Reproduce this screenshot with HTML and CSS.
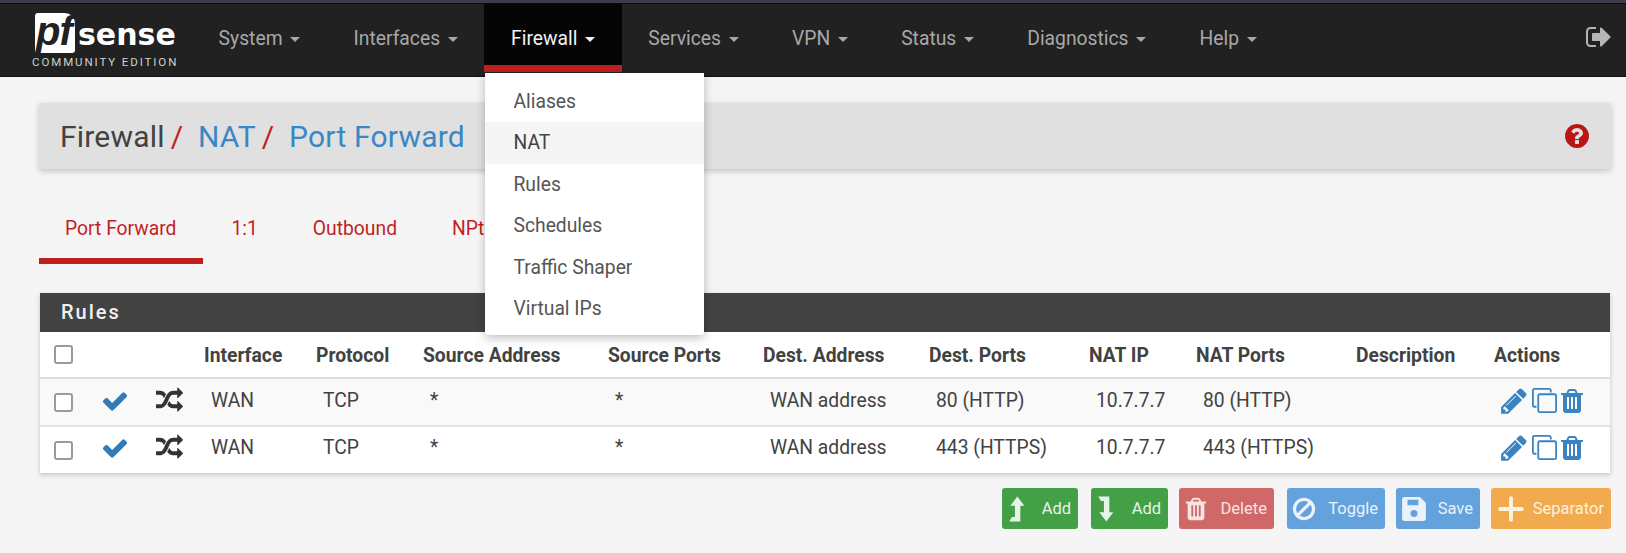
FILE: index.html
```html
<!DOCTYPE html>
<html lang="en">
<head>
    <meta charset="UTF-8">
    <meta name="viewport" content="width=device-width, initial-scale=1.0">
    <title>Firewall: NAT: Port Forward</title>
    <link rel="stylesheet" href="styles.css">
</head>
<body>
    <svg class="icon-defs" width="0" height="0">
        <defs>
            <symbol id="i-check" viewBox="0 0 1792 1792"><path d="M1671 566q0 40-28 68l-724 724-136 136q-28 28-68 28t-68-28l-136-136-362-362q-28-28-28-68t28-68l136-136q28-28 68-28t68 28l294 295 656-657q28-28 68-28t68 28l136 136q28 28 28 68z"/></symbol>
            <symbol id="i-random" viewBox="0 0 1792 1792"><path d="M666 481q-60 92-137 273-22-45-37-72.5t-40.5-63.5-51-56.5-63-35-81.5-14.5h-224q-14 0-23-9t-9-23v-192q0-14 9-23t23-9h224q250 0 410 225zm1126 799q0 14-9 23l-320 320q-9 9-23 9-13 0-22.5-9.5t-9.5-22.5v-192q-32 0-85 .5t-81 1-73-1-71-5-64-10.5-63-18.5-58-28.5-59-40-55-53.5-56-69.5q59-93 136-273 22 45 37 72.5t40.5 63.5 51 56.5 63 35 81.5 14.5h256v-192q0-14 9-23t23-9q12 0 24 10l319 319q9 9 9 23zm0-896q0 14-9 23l-320 320q-9 9-23 9-13 0-22.5-9.5t-9.5-22.5v-192h-256q-48 0-87 15t-69 45-51 61.5-45 77.5q-32 62-78 171-29 66-49.5 111t-54 105-64 100-74 83-90 68.5-106.5 42-128 16.5h-224q-14 0-23-9t-9-23v-192q0-14 9-23t23-9h224q48 0 87-15t69-45 51-61.5 45-77.5q32-62 78-171 29-66 49.5-111t54-105 64-100 74-83 90-68.5 106.5-42 128-16.5h256v-192q0-14 9-23t23-9q12 0 24 10l319 319q9 9 9 23z"/></symbol>
            <symbol id="i-pencil" viewBox="0 0 1792 1792"><path d="M491 1536l91-91-235-235-91 91v107h128v128h107zm523-928q0-22-22-22-10 0-17 7l-542 542q-7 7-7 17 0 22 22 22 10 0 17-7l542-542q7-7 7-17zm-54-192l416 416-832 832h-416v-416zm683 96q0 53-37 90l-166 166-416-416 166-165q36-38 90-38 53 0 91 38l235 234q37 39 37 91z"/></symbol>
            <symbol id="i-clone" viewBox="0 0 1792 1792"><path d="M1664 1632v-1088q0-13-9.5-22.5t-22.5-9.5h-1088q-13 0-22.5 9.5t-9.5 22.5v1088q0 13 9.5 22.5t22.5 9.5h1088q13 0 22.5-9.5t9.5-22.5zm128-1088v1088q0 66-47 113t-113 47h-1088q-66 0-113-47t-47-113v-1088q0-66 47-113t113-47h1088q66 0 113 47t47 113zm-384-384v160h-128v-160q0-13-9.5-22.5t-22.5-9.5h-1088q-13 0-22.5 9.5t-9.5 22.5v1088q0 13 9.5 22.5t22.5 9.5h160v128h-160q-66 0-113-47t-47-113v-1088q0-66 47-113t113-47h1088q66 0 113 47t47 113z"/></symbol>
            <symbol id="i-trash" viewBox="0 0 1792 1792"><path d="M704 1376v-704q0-14-9-23t-23-9h-64q-14 0-23 9t-9 23v704q0 14 9 23t23 9h64q14 0 23-9t9-23zm256 0v-704q0-14-9-23t-23-9h-64q-14 0-23 9t-9 23v704q0 14 9 23t23 9h64q14 0 23-9t9-23zm256 0v-704q0-14-9-23t-23-9h-64q-14 0-23 9t-9 23v704q0 14 9 23t23 9h64q14 0 23-9t9-23zm-544-992h448l-48-117q-7-9-17-11h-317q-10 2-17 11zm928 32v64q0 14-9 23t-23 9h-96v948q0 83-47 143.5t-113 60.5h-832q-66 0-113-58.5t-47-141.5v-952h-96q-14 0-23-9t-9-23v-64q0-14 9-23t23-9h309l70-167q15-37 54-63t79-26h320q40 0 79 26t54 63l70 167h309q14 0 23 9t9 23z"/></symbol>
            <symbol id="i-ban" viewBox="0 0 1792 1792"><path d="M1440 893q0-161-87-295l-754 753q137 89 297 89 111 0 211.5-43.5t173.5-116.5 116-174.5 43-212.5zm-999 299l755-754q-135-91-300-91-148 0-273 73t-198 199-73 274q0 162 89 299zm1223-299q0 157-61 300t-163.5 246-245 164-298.5 61-298.5-61-245-164-163.5-246-61-300 61-299.5 163.5-245.5 245-164 298.5-61 298.5 61 245 164 163.5 245.5 61 299.5z"/></symbol>
            <symbol id="i-level" viewBox="0 0 24 26"><path d="M9.5 1.5 L16 10 H12.3 V24.5 H2 L4.5 20.5 H7.3 V10 H3 Z"/></symbol>
        </defs>
    </svg>

    <div class="top-strip"></div>
    <nav class="navbar">
        <a class="brand">
            <span class="brand-logo"><span class="brand-pf">pf</span><span class="brand-sense">sense</span></span>
            <span class="brand-sub">COMMUNITY EDITION</span>
        </a>
        <ul class="nav-list">
            <li class="nav-item">System <span class="caret"></span></li>
            <li class="nav-item">Interfaces <span class="caret"></span></li>
            <li class="nav-item active">Firewall <span class="caret"></span>
                <ul class="dropdown">
                    <li>Aliases</li>
                    <li class="hover">NAT</li>
                    <li>Rules</li>
                    <li>Schedules</li>
                    <li>Traffic Shaper</li>
                    <li>Virtual IPs</li>
                </ul>
            </li>
            <li class="nav-item">Services <span class="caret"></span></li>
            <li class="nav-item">VPN <span class="caret"></span></li>
            <li class="nav-item">Status <span class="caret"></span></li>
            <li class="nav-item">Diagnostics <span class="caret"></span></li>
            <li class="nav-item">Help <span class="caret"></span></li>
        </ul>
        <svg class="logout" viewBox="0 0 1792 1792"><path d="M704 1440q0 4 1 20t.5 26.5-3 23.5-10 19.5-20.5 6.5h-320q-119 0-203.5-84.5t-84.5-203.5v-704q0-119 84.5-203.5t203.5-84.5h320q13 0 22.5 9.5t9.5 22.5q0 4 1 20t.5 26.5-3 23.5-10 19.5-20.5 6.5h-320q-66 0-113 47t-47 113v704q0 66 47 113t113 47h312l11.5 1 11.5 3 8 5.5 7 9 2 13.5zm928-544q0 26-19 45l-544 544q-19 19-45 19t-45-19-19-45v-288h-448q-26 0-45-19t-19-45v-384q0-26 19-45t45-19h448v-288q0-26 19-45t45-19 45 19l544 544q19 19 19 45z"/></svg>
    </nav>

    <main class="content">
        <header class="page-header">
            <h1 class="crumbs">
                <span>Firewall</span><span class="sep">/</span>
                <a>NAT</a><span class="sep">/</span>
                <a>Port Forward</a>
            </h1>
            <svg class="help" viewBox="0 0 1792 1792"><path d="M1024 1376v-192q0-14-9-23t-23-9h-192q-14 0-23 9t-9 23v192q0 14 9 23t23 9h192q14 0 23-9t9-23zm256-672q0-88-55.5-163t-138.5-116-170-41q-243 0-371 213-15 24 8 42l132 100q7 6 19 6 16 0 25-12 53-68 86-92 34-24 86-24 48 0 85.5 26t37.5 59q0 38-20 61t-68 45q-63 28-115.5 86.5t-52.5 125.5v36q0 14 9 23t23 9h192q14 0 23-9t9-23q0-19 21.5-49.5t54.5-49.5q32-18 49-28.5t46-35 44.5-48 28-60.5 12.5-81zm384 192q0 209-103 385.5t-279.5 279.5-385.5 103-385.5-103-279.5-279.5-103-385.5 103-385.5 279.5-279.5 385.5-103 385.5 103 279.5 279.5 103 385.5z"/></svg>
        </header>

        <ul class="tabs">
            <li class="tab active">Port Forward</li>
            <li class="tab">1:1</li>
            <li class="tab">Outbound</li>
            <li class="tab">NPt</li>
        </ul>

        <section class="panel">
            <h2 class="panel-title">Rules</h2>
            <table class="rules">
                <colgroup>
                    <col class="c-check"><col class="c-state"><col class="c-type">
                    <col class="c-if"><col class="c-proto"><col class="c-src"><col class="c-sport">
                    <col class="c-dst"><col class="c-dport"><col class="c-ip"><col class="c-nport">
                    <col class="c-desc"><col class="c-act">
                </colgroup>
                <thead>
                    <tr>
                        <th><span class="checkbox"></span></th>
                        <th></th>
                        <th></th>
                        <th>Interface</th>
                        <th>Protocol</th>
                        <th>Source Address</th>
                        <th>Source Ports</th>
                        <th>Dest. Address</th>
                        <th>Dest. Ports</th>
                        <th>NAT IP</th>
                        <th>NAT Ports</th>
                        <th>Description</th>
                        <th>Actions</th>
                    </tr>
                </thead>
                <tbody>
                    <tr class="odd">
                        <td class="check-cell"><span class="checkbox"></span></td>
                        <td class="icon-cell"><svg class="ico-check"><use href="#i-check"/></svg></td>
                        <td class="icon-cell"><svg class="ico-random"><use href="#i-random"/></svg></td>
                        <td>WAN</td>
                        <td>TCP</td>
                        <td>*</td>
                        <td>*</td>
                        <td>WAN address</td>
                        <td>80 (HTTP)</td>
                        <td>10.7.7.7</td>
                        <td>80 (HTTP)</td>
                        <td></td>
                        <td class="actions">
                            <svg class="act-edit"><use href="#i-pencil"/></svg><svg class="act-copy"><use href="#i-clone"/></svg><svg class="act-del"><use href="#i-trash"/></svg>
                        </td>
                    </tr>
                    <tr>
                        <td class="check-cell"><span class="checkbox"></span></td>
                        <td class="icon-cell"><svg class="ico-check"><use href="#i-check"/></svg></td>
                        <td class="icon-cell"><svg class="ico-random"><use href="#i-random"/></svg></td>
                        <td>WAN</td>
                        <td>TCP</td>
                        <td>*</td>
                        <td>*</td>
                        <td>WAN address</td>
                        <td>443 (HTTPS)</td>
                        <td>10.7.7.7</td>
                        <td>443 (HTTPS)</td>
                        <td></td>
                        <td class="actions">
                            <svg class="act-edit"><use href="#i-pencil"/></svg><svg class="act-copy"><use href="#i-clone"/></svg><svg class="act-del"><use href="#i-trash"/></svg>
                        </td>
                    </tr>
                </tbody>
            </table>
        </section>

        <div class="button-row">
            <button class="btn btn-green"><svg class="btn-icon level"><use href="#i-level"/></svg>Add</button>
            <button class="btn btn-green"><svg class="btn-icon level flip"><use href="#i-level"/></svg>Add</button>
            <button class="btn btn-red"><svg class="btn-icon"><use href="#i-trash"/></svg>Delete</button>
            <button class="btn btn-blue"><svg class="btn-icon"><use href="#i-ban"/></svg>Toggle</button>
            <button class="btn btn-blue">
                <svg class="btn-icon" viewBox="0 0 24 24"><path fill-rule="evenodd" d="M3 1 H17.5 L23 6.5 V21 Q23 23 21 23 H3 Q1 23 1 21 V3 Q1 1 3 1 Z M6 3.5 V8.5 H16 V3.5 Z M12 13 A3.2 3.2 0 1 0 12 19.4 A3.2 3.2 0 1 0 12 13 Z"/></svg>Save
            </button>
            <button class="btn btn-orange">
                <svg class="btn-icon" viewBox="0 0 24 24"><path d="M12 2 V22 M2 12 H22" stroke="currentColor" stroke-width="3.6" stroke-linecap="round" fill="none"/></svg>Separator
            </button>
        </div>
    </main>
</body>
</html>
```

FILE: styles.css
```css
* {
    box-sizing: border-box;
}

body {
    font-family: 'Roboto', 'Liberation Sans', sans-serif;
    font-size: 19.3px;
    background-color: #f5f5f5;
    color: #424242;
    margin: 0;
    height: 553px;
    overflow: hidden;
}

ul {
    list-style: none;
    margin: 0;
    padding: 0;
}

.icon-defs {
    display: block;
    height: 0;
}

.top-strip {
    height: 3px;
    background-color: #3b3c4c;
}

/* Navbar */
.navbar {
    display: flex;
    align-items: flex-start;
    height: 74px;
    background-color: #212121;
    border-top: 1px solid #0a0a0a;
    border-bottom: 1px solid #111;
}

.brand {
    display: flex;
    flex-direction: column;
    width: 192px;
    padding: 9px 0 0 32px;
    color: #fff;
}

.brand-logo {
    display: flex;
    align-items: center;
    height: 40px;
    padding-left: 3px;
}

.brand-pf {
    width: 40px;
    height: 40px;
    background-color: #fff;
    color: #212121;
    font-family: 'Liberation Sans', sans-serif;
    font-size: 40px;
    font-weight: bold;
    font-style: italic;
    line-height: 37px;
    letter-spacing: -1px;
    padding-left: 1px;
    border-radius: 3px 10px 3px 3px;
}

.brand-sense {
    font-family: 'DejaVu Sans', sans-serif;
    font-size: 30px;
    font-weight: bold;
    line-height: 40px;
    margin: 3px 0 0 3px;
}

.brand-sub {
    font-size: 11.5px;
    line-height: 12px;
    letter-spacing: 1.9px;
    color: #d0d0d0;
    margin-top: 3px;
    white-space: nowrap;
}

.nav-list {
    display: flex;
}

.nav-item {
    position: relative;
    height: 61px;
    line-height: 69px;
    padding: 0 26.6px;
    color: #a8a8a8;
    white-space: nowrap;
}

.nav-item.active {
    background-color: #050505;
    color: #f2f2f2;
    box-shadow: 0 7px 0 #c11f1f;
}

.caret {
    display: inline-block;
    width: 0;
    height: 0;
    margin-left: 3px;
    vertical-align: middle;
    border-top: 5px solid currentColor;
    border-left: 5.5px solid transparent;
    border-right: 5.5px solid transparent;
}

.dropdown {
    position: absolute;
    top: 69px;
    left: 1px;
    z-index: 10;
    width: 219px;
    height: 262px;
    padding: 8px 0;
    background-color: #fff;
    border-radius: 0 0 3px 3px;
    box-shadow: 0 3px 10px rgba(0, 0, 0, 0.25);
    color: #555;
    line-height: 41.4px;
}

.dropdown li {
    height: 41.4px;
    padding-left: 28px;
}

.dropdown li.hover {
    background-color: #f5f5f5;
    color: #424242;
}

.logout {
    width: 28px;
    height: 28px;
    fill: #b5b5b5;
    margin: 19px 13px 0 auto;
}

/* Page */
.content {
    padding: 26px 15px 0 39px;
}

.page-header {
    display: flex;
    align-items: center;
    justify-content: space-between;
    height: 66px;
    padding: 0 20px 0 21px;
    background-color: #e0e0e0;
    border-radius: 3px;
    box-shadow: 0 2px 6px rgba(0, 0, 0, 0.22);
}

.crumbs {
    margin: 0;
    font-size: 30px;
    font-weight: normal;
    letter-spacing: 0.2px;
    white-space: nowrap;
}

.crumbs a {
    color: #3a87c5;
}

.sep {
    color: #c11f1f;
    margin: 0 7px 0 6px;
}

.help {
    width: 28px;
    height: 28px;
    fill: #bb1515;
}

.tabs {
    display: flex;
    gap: 3px;
    margin-top: 31px;
}

.tab {
    height: 64px;
    line-height: 57px;
    padding: 0 26px;
    color: #c11f1f;
    white-space: nowrap;
}

.tab.active {
    border-bottom: 6px solid #c11f1f;
}

.panel {
    margin: 29px 1px 0 1px;
    background-color: #fff;
    box-shadow: 0 2px 5px rgba(0, 0, 0, 0.2);
}

.panel-title {
    margin: 0;
    height: 39px;
    padding-left: 21px;
    background-color: #424242;
    color: #f0f0f0;
    font-size: 20px;
    font-weight: 500;
    line-height: 38px;
    letter-spacing: 2px;
}

.rules {
    width: 100%;
    table-layout: fixed;
    border-collapse: collapse;
    white-space: nowrap;
}

.c-check { width: 60px; }
.c-state { width: 53px; }
.c-type { width: 44px; }
.c-if { width: 112px; }
.c-proto { width: 107px; }
.c-src { width: 185px; }
.c-sport { width: 155px; }
.c-dst { width: 166px; }
.c-dport { width: 160px; }
.c-ip { width: 107px; }
.c-nport { width: 160px; }
.c-desc { width: 138px; }
.c-act { width: 123px; }

.rules th {
    height: 46px;
    padding: 1px 0 0 7px;
    text-align: left;
    font-weight: 700;
    font-size: 19.3px;
    color: #424242;
    border-bottom: 2px solid #ddd;
}

.rules td {
    padding: 0 0 5px 14px;
    height: 47px;
    color: #424242;
    border-bottom: 2px solid #e4e4e4;
}

.rules tbody tr:last-child td {
    border-bottom: 0;
}

.rules .odd td {
    height: 48px;
    padding-bottom: 3px;
    background-color: #f9f9f9;
}

.rules th:first-child,
.rules .check-cell,
.rules .odd .check-cell {
    padding: 0 0 0 14px;
}

.rules .icon-cell {
    padding-left: 3px;
}

.checkbox {
    display: block;
    width: 19px;
    height: 19px;
    background-color: #fff;
    border: 2px solid #9a9aa6;
    border-radius: 3px;
}

.rules svg {
    display: block;
}

.ico-check {
    width: 28px;
    height: 28px;
    fill: #337ab7;
    margin-left: -2px;
}

.ico-random {
    width: 27px;
    height: 27px;
    fill: #333;
}

.rules .actions {
    padding-left: 12px;
    font-size: 0;
}

.rules .actions svg {
    display: inline-block;
    fill: #3a82c0;
    vertical-align: middle;
}

.act-edit {
    width: 30px;
    height: 30px;
}

.act-copy {
    width: 25px;
    height: 25px;
    margin-left: 3px;
}

.act-del {
    width: 28px;
    height: 28px;
    margin-left: 1px;
}

/* Buttons */
.button-row {
    display: flex;
    justify-content: flex-end;
    gap: 11px;
    margin-top: 15px;
}

.btn {
    display: flex;
    align-items: center;
    justify-content: space-between;
    height: 41px;
    padding: 0 7px 0 4px;
    border: 0;
    border-radius: 3px;
    font-family: inherit;
    font-size: 16.5px;
    color: #fff;
}

.btn:nth-child(1) { width: 76px; margin-right: 2px; }
.btn:nth-child(2) { width: 77px; }
.btn:nth-child(3) { width: 95px; margin-right: 2px; }
.btn:nth-child(4) { width: 98px; }
.btn:nth-child(5) { width: 84px; padding-left: 5px; }
.btn:nth-child(6) { width: 120px; padding-left: 7px; }

.btn-icon {
    width: 26px;
    height: 26px;
    fill: currentColor;
}

.btn-icon.level {
    width: 28px;
    height: 28px;
}

.flip {
    transform: scaleY(-1);
}

.btn-green {
    background-color: #43a047;
    color: #e6f3e7;
}

.btn-red {
    background-color: #d06868;
    color: #f8e3e3;
}

.btn-blue {
    background-color: #64a2dd;
    color: #e9f2fb;
}

.btn-orange {
    background-color: #f1ab4e;
    color: #fdf1df;
}
```
